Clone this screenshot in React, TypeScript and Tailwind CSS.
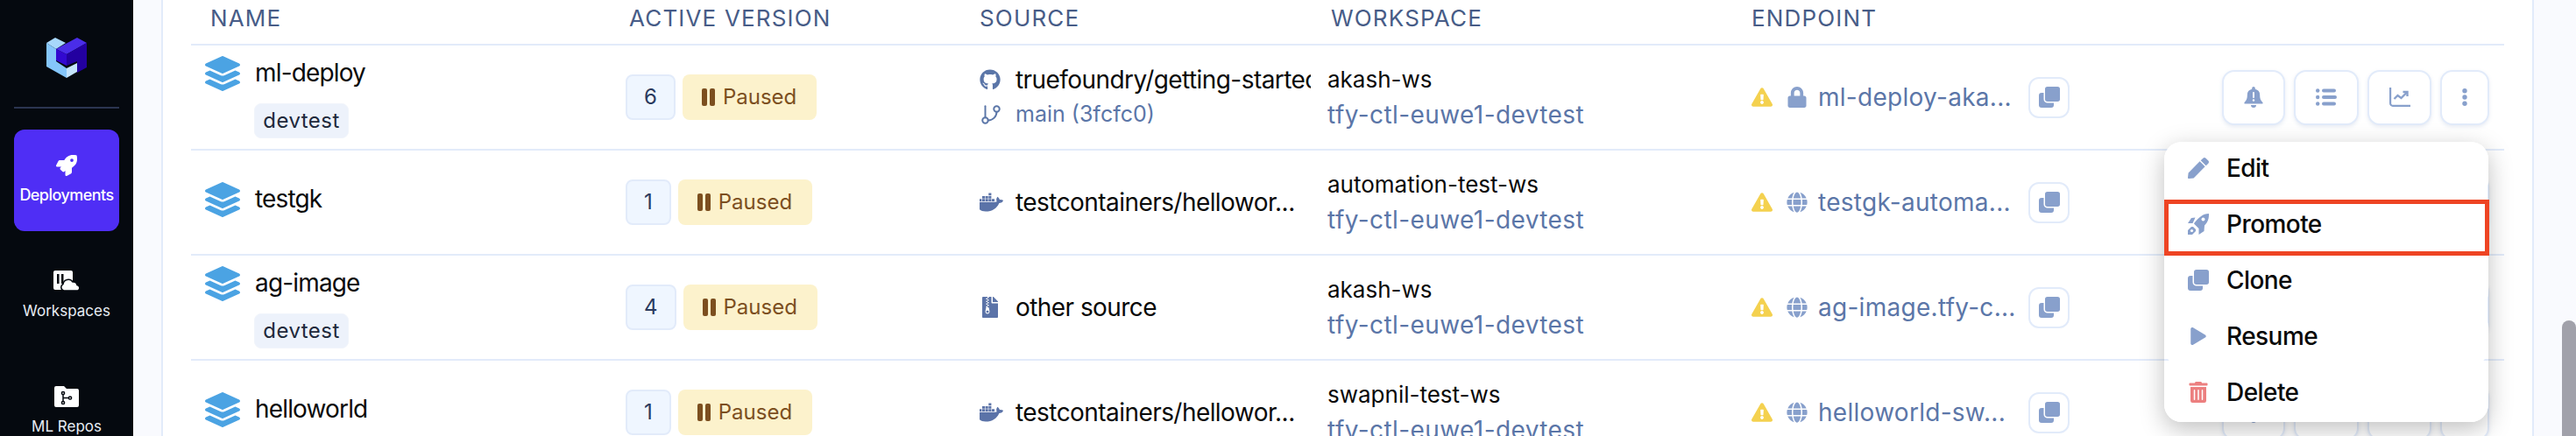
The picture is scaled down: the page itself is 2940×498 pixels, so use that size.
import React from "react";
import {
  FaLayerGroup,
  FaGithub,
  FaDocker,
  FaFileArchive,
  FaExclamationTriangle,
  FaLock,
  FaGlobe,
  FaPen,
  FaPlay,
  FaTrashAlt,
  FaRocket,
} from "react-icons/fa";
import { GitBranch } from "lucide-react";

type Row = {
  name: string;
  tag?: string;
  version: string;
  source: string;
  sourceIcon: "github" | "docker" | "file";
  branch?: string;
  workspace: string;
  cluster: string;
  endpoint: string;
  secure?: boolean;
};

const ROWS: Row[] = [
  {
    name: "ml-deploy",
    tag: "devtest",
    version: "6",
    source: "truefoundry/getting-started",
    sourceIcon: "github",
    branch: "main (3fcfc0)",
    workspace: "akash-ws",
    cluster: "tfy-ctl-euwe1-devtest",
    endpoint: "ml-deploy-aka...",
    secure: true,
  },
  {
    name: "testgk",
    version: "1",
    source: "testcontainers/hellowor...",
    sourceIcon: "docker",
    workspace: "automation-test-ws",
    cluster: "tfy-ctl-euwe1-devtest",
    endpoint: "testgk-automa...",
  },
  {
    name: "ag-image",
    tag: "devtest",
    version: "4",
    source: "other source",
    sourceIcon: "file",
    workspace: "akash-ws",
    cluster: "tfy-ctl-euwe1-devtest",
    endpoint: "ag-image.tfy-c...",
  },
  {
    name: "helloworld",
    version: "1",
    source: "testcontainers/hellowor...",
    sourceIcon: "docker",
    workspace: "swapnil-test-ws",
    cluster: "tfy-ctl-euwe1-devtest",
    endpoint: "helloworld-sw...",
  },
];

const Logo = () => (
  <svg width="46" height="46" viewBox="0 0 46 46" className="shrink-0">
    <polygon points="0,6 10,0 22,6 11,13" fill="#a8d8fb" />
    <polygon points="0,6 11,13 11,27 23,35 23,46 0,33" fill="#85c6fb" />
    <polygon points="23,35 35,29 35,39 23,46" fill="#c5e4fc" />
    <polygon points="11,13 35,0 46,6 23,19" fill="#4a2de8" />
    <polygon points="11,13 23,19 23,32 11,26" fill="#3208d0" />
    <polygon points="23,19 46,6 46,34 35,40 35,27 23,32" fill="#2300a0" />
  </svg>
);

const WorkspacesIcon = () => (
  <svg width="30" height="24" viewBox="0 0 30 24">
    <rect x="0" y="0" width="22" height="22" rx="2" fill="#fff" />
    <rect x="4" y="4" width="2.5" height="11" fill="#05090f" />
    <rect x="9" y="4" width="2.5" height="11" fill="#05090f" />
    <path
      d="M12 23a4 4 0 0 1-1-7.500 6 6 0 0 1 11-2.500 4.500 4.500 0 0 1 5 3.500 3.500 3.500 0 0 1 1 6.500z"
      fill="#fff"
      stroke="#05090f"
      strokeWidth="1.500"
    />
  </svg>
);

const ReposIcon = () => (
  <svg width="28" height="24" viewBox="0 0 28 24">
    <path d="M2 0h9l3 3h12a2 2 0 0 1 2 2v17a2 2 0 0 1-2 2H2a2 2 0 0 1-2-2V2a2 2 0 0 1 2-2z" fill="#fff" />
    <g fill="none" stroke="#05090f" strokeWidth="1.500">
      <circle cx="10" cy="8" r="1.600" />
      <circle cx="10" cy="19" r="1.600" />
      <circle cx="18" cy="13.500" r="1.600" />
      <path d="M10 9.600v7.800M10 13.500h6.400" />
    </g>
  </svg>
);

const CloneIcon = () => (
  <svg width="24" height="24" viewBox="0 0 24 24">
    <rect x="0" y="7" width="17" height="17" rx="3" fill="#88a0cc" />
    <rect x="6.250" y="-0.750" width="18.500" height="18.500" rx="3.500" fill="#88a0cc" stroke="#fff" strokeWidth="1.500" />
  </svg>
);

const BellIcon = () => (
  <svg width="22" height="24" viewBox="0 0 22 24">
    <path
      d="M11 0a1.800 1.800 0 0 1 1.800 1.800v1a7 7 0 0 1 5.400 6.900c0 5 1.500 6.300 3.200 8.200.5.600.2 1.600-.8 1.600H1.400c-1 0-1.300-1-.8-1.600 1.700-1.900 3.200-3.200 3.200-8.200a7 7 0 0 1 5.400-6.900v-1A1.800 1.800 0 0 1 11 0z"
      fill="#88a0cc"
    />
    <path d="M8 21h6a3 3 0 0 1-6 0z" fill="#88a0cc" />
    <rect x="10" y="6" width="2" height="7" rx="1" fill="#fff" />
    <circle cx="11" cy="15.500" r="1.200" fill="#fff" />
  </svg>
);

const ListIcon = () => (
  <svg width="24" height="20" viewBox="0 0 24 20" fill="#88a0cc">
    <circle cx="2.200" cy="2.500" r="2.200" />
    <circle cx="2.200" cy="10" r="2.200" />
    <circle cx="2.200" cy="17.500" r="2.200" />
    <rect x="7" y="0.500" width="16" height="4" rx="2" />
    <rect x="7" y="8" width="17" height="4" rx="2" />
    <rect x="7" y="15.500" width="16" height="4" rx="2" />
  </svg>
);

const ChartIcon = () => (
  <svg width="24" height="22" viewBox="0 0 24 22" fill="none" stroke="#88a0cc" strokeWidth="2.200">
    <path d="M1.100 0v18a2.800 2.800 0 0 0 2.800 2.800H24" />
    <path d="M5.500 13l4-4 4 3 6-6" strokeWidth="2.400" />
    <path d="M15.500 5h5v5" strokeWidth="2.400" />
  </svg>
);

const DotsIcon = () => (
  <svg width="6" height="20" viewBox="0 0 6 20" fill="#88a0cc">
    <circle cx="3" cy="2.700" r="2.700" />
    <circle cx="3" cy="10" r="2.700" />
    <circle cx="3" cy="17.300" r="2.700" />
  </svg>
);

const PromoteIcon = () => (
  <svg width="24" height="24" viewBox="0 0 24 24">
    <path d="M24 0c.3 6-1.500 10-5 13.500l-.5 6.500-6 4V17l-5.500-5.500.5-1C12 5 17 0 24 0z" fill="#88a0cc" />
    <path d="M8.500 4.500L4 5 0 11h5.500z" fill="#88a0cc" />
    <circle cx="17.500" cy="6.500" r="2" fill="#fff" />
    <path d="M0 24v-5l4-4h2l3 3v2l-4 4z" fill="#88a0cc" />
    <circle cx="4.500" cy="19.500" r="1.600" fill="#fff" />
  </svg>
);

const SourceIcon = ({ kind }: { kind: Row["sourceIcon"] }) => {
  if (kind === "github") return <FaGithub className="size-[24px] text-[#5b76a8]" />;
  if (kind === "docker") return <FaDocker className="-ml-[3px] size-[30px] text-[#5b73a8]" />;
  return <FaFileArchive className="ml-[3px] h-[24px] w-[18px] text-[#5b73a8]" />;
};

const SideItem = ({ icon, label, active }: { icon: React.ReactNode; label: string; active?: boolean }) => (
  <div
    className={`flex h-[116px] w-[120px] shrink-0 flex-col items-center justify-center gap-[10px] rounded-[12px] ${
      active ? "bg-[#4f2ef5] text-white" : "text-[#e8edf5]"
    }`}
  >
    {icon}
    <span
      className={`whitespace-nowrap leading-[24px] ${
        active ? "text-[18px] font-medium tracking-[-0.03em]" : "text-[17px] font-normal"
      }`}
    >
      {label}
    </span>
  </div>
);

const ActionButton = ({ width, children }: { width: string; children: React.ReactNode }) => (
  <div
    className={`flex h-[63px] ${width} items-center justify-center rounded-[14px] border-2 border-[#e2ebfa] bg-white shadow-[0_2px_4px_rgba(100,130,180,0.15)]`}
  >
    {children}
  </div>
);

const MenuItem = ({ icon, label }: { icon: React.ReactNode; label: string }) => (
  <div className="flex h-[64px] items-center gap-[20px] rounded-[20px] bg-white pb-[4px] pl-[27px] text-[28px] font-medium tracking-[-0.02em] text-[#0a0a0a]">
    <div className="flex w-[24px] justify-center">{icon}</div>
    <span>{label}</span>
  </div>
);

const TableRow = ({ row }: { row: Row }) => (
  <div className="grid h-[120px] grid-cols-[496px_404px_397px_484px_1fr] border-b-2 border-[#e2ebfa]">
    <div className="flex flex-col justify-center pl-[16px]">
      <div className={`flex h-[40px] items-center gap-[17px] ${row.tag ? "mb-[14px]" : "mb-[6px]"}`}>
        <FaLayerGroup className="size-[40px] text-[#4ba3e3]" />
        <span className="pb-[2px] text-[28px] leading-[40px] tracking-[-0.03em] text-[#0a0a0a]">{row.name}</span>
      </div>
      {row.tag && (
        <div className="ml-[56px] flex h-[40px] w-[108px] items-center justify-center rounded-[8px] border border-[#f0f4fb] bg-[#edf2fb] text-[24px] tracking-[0.02em] text-[#1e293b]">
          {row.tag}
        </div>
      )}
    </div>

    <div className="flex items-center gap-[8px]">
      <div className="flex h-[52px] items-center justify-center rounded-[8px] border-2 border-[#e2ebfa] bg-[#eff6ff] px-[19px] text-[24px] text-[#2a3a5e]">
        {row.version}
      </div>
      <div className="flex h-[52px] w-[153px] items-center gap-[9px] rounded-[8px] bg-[#fcf2cc] pl-[22px] text-[24px] text-[#7c4f1f]">
        <span className="flex gap-[3px]">
          <span className="h-[20px] w-[6px] rounded-[2px] bg-[#7c4f1f]" />
          <span className="h-[20px] w-[6px] rounded-[2px] bg-[#7c4f1f]" />
        </span>
        Paused
      </div>
    </div>

    <div className="flex w-[378px] flex-col justify-center gap-[8px] overflow-hidden">
      <div className="flex h-[32px] items-center">
        <div className="flex w-[41px] shrink-0 items-center">
          <SourceIcon kind={row.sourceIcon} />
        </div>
        <span className="whitespace-nowrap text-[28px] tracking-[-0.02em] text-[#0a0a0a]">{row.source}</span>
      </div>
      {row.branch && (
        <div className="flex h-[32px] items-center">
          <div className="flex w-[41px] shrink-0 items-center">
            <GitBranch size={26} strokeWidth={1.8} className="text-[#5b76a8]" />
          </div>
          <span className="whitespace-nowrap text-[25px] text-[#5b76a8]">{row.branch}</span>
        </div>
      )}
    </div>

    <div className="flex flex-col justify-center gap-[8px]">
      <span className="h-[32px] text-[26px] leading-[32px] text-[#0a0a0a]">{row.workspace}</span>
      <span className="h-[32px] text-[28px] leading-[32px] tracking-[0.015em] text-[#5b76a8]">{row.cluster}</span>
    </div>

    <div className="flex items-center justify-between pr-[17px]">
      <div className="flex items-center">
        <FaExclamationTriangle className="size-[24px] text-[#f4d14f]" />
        <div className="ml-[16px] flex w-[36px] items-center">
          {row.secure ? (
            <FaLock className="size-[24px] text-[#88a0cc]" />
          ) : (
            <FaGlobe className="size-[24px] text-[#88a0cc]" />
          )}
        </div>
        <span className="w-[240px] whitespace-nowrap text-[28px] tracking-[0.01em] text-[#5b76a8]">{row.endpoint}</span>
        <div className="flex size-[47px] items-center justify-center rounded-[12px] border-2 border-[#e2ebfa] bg-white">
          <CloneIcon />
        </div>
      </div>
      <div className="flex items-center gap-[10px]">
        <ActionButton width="w-[72px]">
          <BellIcon />
        </ActionButton>
        <ActionButton width="w-[74px]">
          <ListIcon />
        </ActionButton>
        <ActionButton width="w-[73px]">
          <ChartIcon />
        </ActionButton>
        <ActionButton width="w-[56px]">
          <DotsIcon />
        </ActionButton>
      </div>
    </div>
  </div>
);

export default function App() {
  return (
    <div className="relative flex h-[498px] w-[2940px] overflow-hidden bg-[#f9fafe] font-['Inter',sans-serif]">
      <div className="flex h-[620px] w-[152px] shrink-0 flex-col items-center bg-[#05090f] pt-[43px]">
        <Logo />
        <div className="mt-[33px] mb-[24px] h-[2px] w-[120px] shrink-0 bg-[#2b3550]" />
        <SideItem active label="Deployments" icon={<FaRocket className="size-[24px]" />} />
        <div className="mt-[16px] flex flex-col gap-[16px]">
          <SideItem label="Workspaces" icon={<WorkspacesIcon />} />
          <SideItem label="ML Repos" icon={<ReposIcon />} />
        </div>
      </div>

      <div className="ml-[32px] h-[620px] w-[2708px] shrink-0 border-x-2 border-[#e2ebfa] bg-white px-[32px]">
        <div className="grid h-[52px] grid-cols-[496px_404px_397px_484px_1fr] border-b-2 border-[#e2ebfa] pb-[8px] text-[26px] leading-[42px] tracking-[0.045em] text-[#475c87]">
          <span className="pl-[22px]">NAME</span>
          <span className="pl-[4px]">ACTIVE VERSION</span>
          <span>SOURCE</span>
          <span className="pl-[4px]">WORKSPACE</span>
          <span>ENDPOINT</span>
        </div>
        {ROWS.map((row) => (
          <TableRow key={row.name} row={row} />
        ))}
      </div>

      {/* dropdown opened from the first row */}
      <div className="absolute top-[162px] left-[2470px] flex w-[370px] flex-col rounded-[20px] shadow-[0_8px_28px_rgba(0,0,0,0.25)]">
        <MenuItem label="Edit" icon={<FaPen className="size-[24px] text-[#88a0cc]" />} />
        <MenuItem label="Promote" icon={<PromoteIcon />} />
        <MenuItem label="Clone" icon={<CloneIcon />} />
        <MenuItem label="Resume" icon={<FaPlay className="size-[20px] text-[#88a0cc]" />} />
        <MenuItem label="Delete" icon={<FaTrashAlt className="size-[24px] text-[#ec7f7f]" />} />
      </div>
      {/* red annotation box round the Promote item */}
      <div className="absolute top-[228px] left-[2470px] h-[64px] w-[371px] border-[5px] border-[#ee4423]" />

      <div className="absolute top-[366px] left-[2924px] h-[132px] w-[16px] rounded-t-[8px] bg-[#a1a1aa]" />
    </div>
  );
}
